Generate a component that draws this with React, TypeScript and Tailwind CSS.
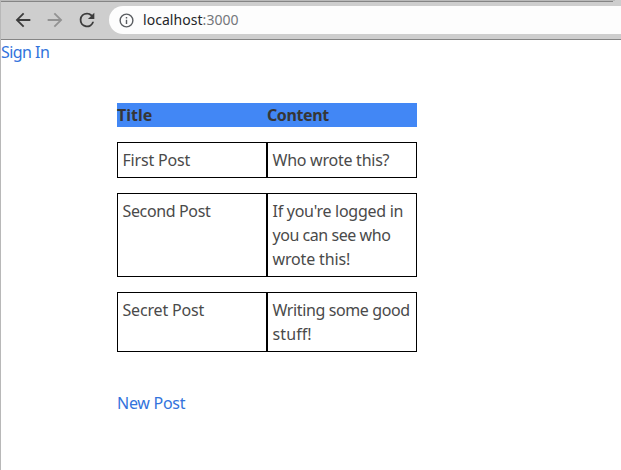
import React from "react";

const posts = [
  { title: "First Post", titleTracking: "tracking-[-0.18px]", lines: [{ text: "Who wrote this?", tracking: "tracking-[-0.25px]" }] },
  {
    title: "Second Post",
    titleTracking: "tracking-[-0.36px]",
    lines: [
      { text: "If you're logged in", tracking: "tracking-[-0.28px]" },
      { text: "you can see who", tracking: "tracking-[-0.45px]" },
      { text: "wrote this!", tracking: "tracking-[-0.15px]" },
    ],
  },
  {
    title: "Secret Post",
    titleTracking: "tracking-[-0.18px]",
    lines: [
      { text: "Writing some good", tracking: "tracking-[-0.38px]" },
      { text: "stuff!", tracking: "tracking-[0.1px]" },
    ],
  },
];

function BrowserBar() {
  return (
    <header className="h-10 bg-[#cecece] border-b border-[#858585]">
      <div className="flex h-[2px] flex-col">
        <div className="mr-1.5 h-px bg-[#bababa]" />
        <div className="mr-2 h-px bg-[#858585]" />
      </div>
      <div className="mt-1 flex h-7 items-center">
        <svg className="ml-[11px] h-[22px] w-[22px] shrink-0" viewBox="0 0 24 24" fill="#3c3c3c">
          <path d="M20 10.9H7.83l5.59-5.49L12 4l-8 8 8 8 1.41-1.41L7.83 13.1H20v-2.2z" />
        </svg>
        <svg className="ml-[10px] h-[22px] w-[22px] shrink-0" viewBox="0 0 24 24" fill="#929292">
          <path d="M12 4l-1.41 1.41L16.17 10.9H4v2.2h12.17l-5.58 5.49L12 20l8-8z" />
        </svg>
        <svg className="ml-[10px] h-[22px] w-[22px] shrink-0" viewBox="0 0 24 24" fill="#3c3c3c">
          <path d="M17.65 6.35A7.958 7.958 0 0 0 12 4a8 8 0 1 0 7.73 10h-2.08A6 6 0 1 1 12 6c1.66 0 3.14.69 4.22 1.78L13 11h7V4l-2.35 2.35z" />
        </svg>
        <div className="ml-[11px] flex h-7 flex-1 items-center rounded-l-full bg-[#fdfdfd] pl-[9px] font-['Noto_Sans',sans-serif] text-sm">
          <svg className="mr-2 h-[17px] w-[17px] shrink-0" viewBox="0 0 24 24" fill="#5a5d61">
            <path d="M11 7h2v2h-2zm0 4h2v6h-2zm1-9a10 10 0 1 0 0 20 10 10 0 0 0 0-20zm0 18a8 8 0 1 1 0-16 8 8 0 0 1 0 16z" />
          </svg>
          <span className="tracking-[0.05px] text-[#242629]">localhost</span>
          <span className="tracking-[0.05px] text-[#74777b]">:3000</span>
        </div>
      </div>
    </header>
  );
}

export default function App() {
  return (
    <div className="h-[470px] w-[621px] overflow-hidden border-l border-[#b8b8b8] bg-white font-['Noto_Sans',sans-serif] text-base leading-6 text-[#4a4a4a]">
      <BrowserBar />
      <main>
        <a href="#" className="block whitespace-nowrap tracking-[-0.55px] text-[#3273dc]">Sign In</a>
        <section className="ml-[116px] mt-[39px] w-[300px] whitespace-nowrap">
          <div className="grid grid-cols-2 bg-[#4287f5] font-bold text-[#363636]">
            <span className="tracking-[0px]">Title</span>
            <span className="tracking-[-0.4px]">Content</span>
          </div>
          {posts.map((post) => (
            <div key={post.title} className="mt-[15px] grid grid-cols-2">
              <div className="border border-black p-[5px] pl-[4.5px]">
                <span className={post.titleTracking}>{post.title}</span>
              </div>
              <div className="border border-black p-[5px] pl-[4.5px]">
                {post.lines.map((line) => (
                  <div key={line.text} className={line.tracking}>{line.text}</div>
                ))}
              </div>
            </div>
          ))}
          <a href="#" className="mt-[39px] block tracking-[-0.28px] text-[#3273dc]">New Post</a>
        </section>
      </main>
    </div>
  );
}
